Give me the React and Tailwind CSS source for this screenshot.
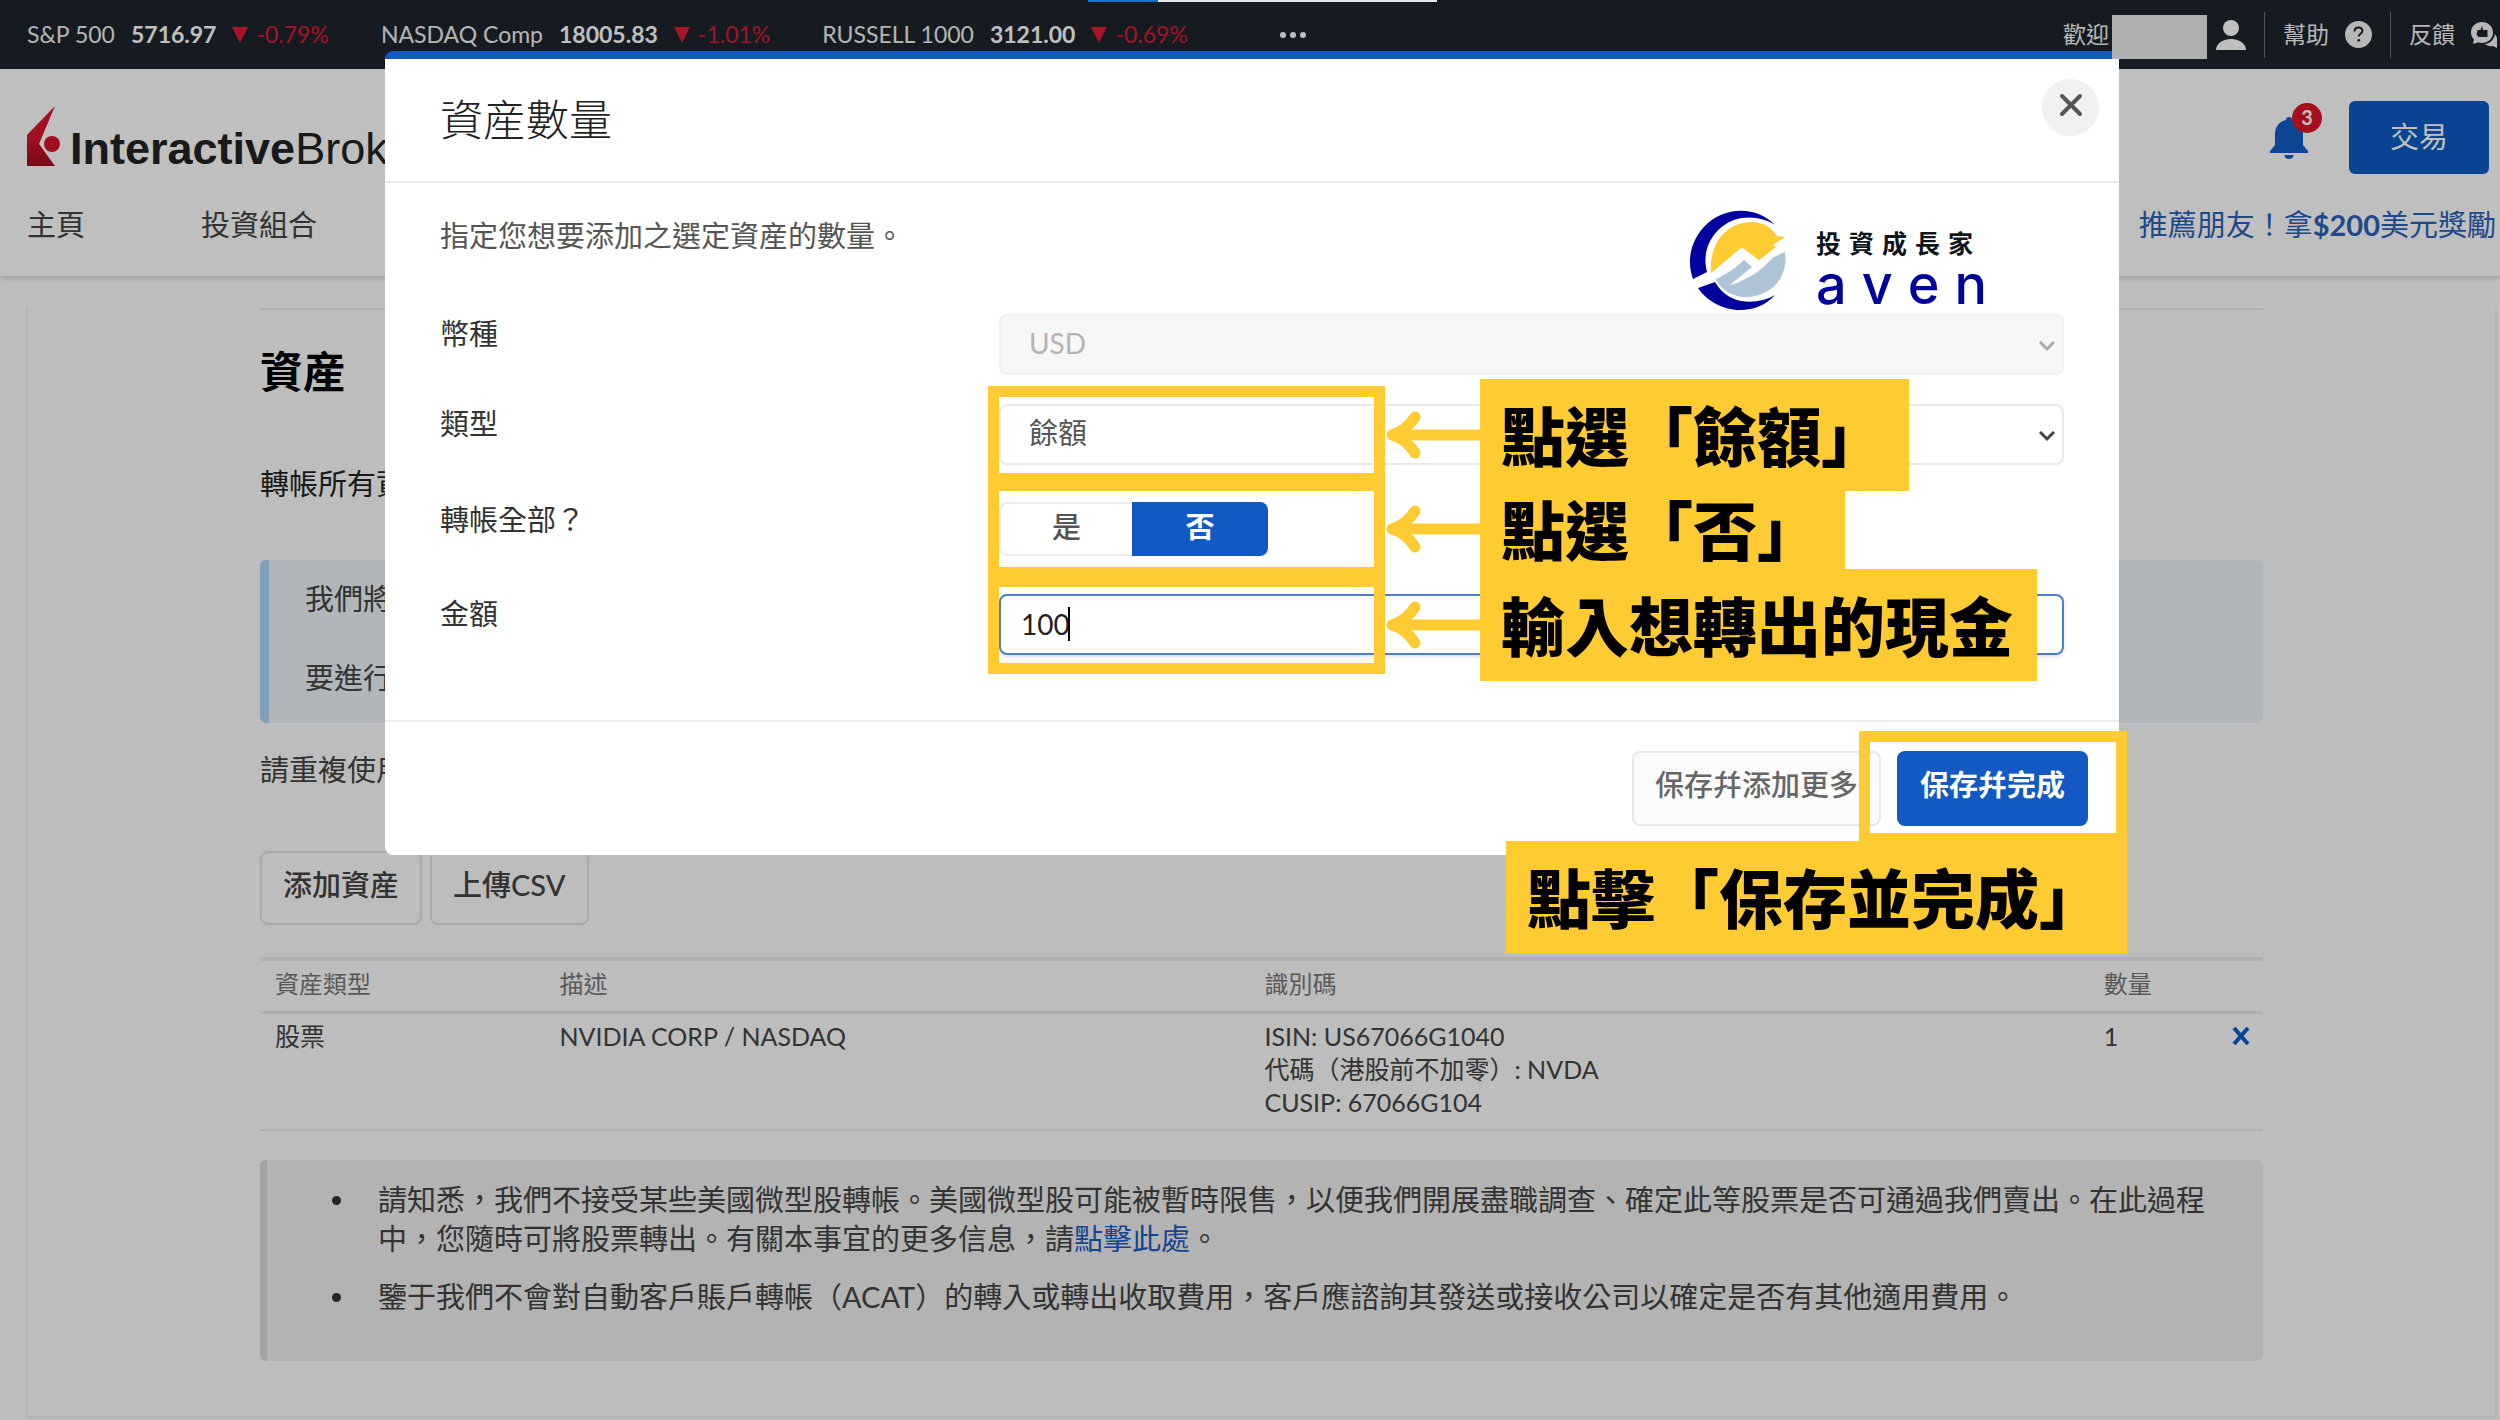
import { useState } from 'react'

const TICKERS = [
  { name: 'S&P 500', value: '5716.97', change: '-0.79%' },
  { name: 'NASDAQ Comp', value: '18005.83', change: '-1.01%' },
  { name: 'RUSSELL 1000', value: '3121.00', change: '-0.69%' },
]

function Ticker({ name, value, change }) {
  return (
    <div className="flex items-center">
      <span className="text-[#f0f0f0]">{name}</span>
      <span className="ml-4 font-bold text-white">{value}</span>
      <svg className="ml-4 h-4 w-4" viewBox="0 0 16 16" fill="#e01c34">
        <path d="M0 0h16L8 16z" />
      </svg>
      <span className="ml-2 text-[#d81c34]">{change}</span>
    </div>
  )
}

function TopBar() {
  return (
    <div className="flex h-[69px] items-center justify-between bg-[#1c242b] pl-[27px] pr-[3px] text-[23px]">
      <div className="flex items-center gap-[52px]">
        {TICKERS.map(item => <Ticker key={item.name} {...item} />)}
        <button aria-label="更多" className="ml-10 flex gap-1">
          <span className="h-[6px] w-[6px] rounded-full bg-white" />
          <span className="h-[6px] w-[6px] rounded-full bg-white" />
          <span className="h-[6px] w-[6px] rounded-full bg-white" />
        </button>
      </div>
      <div className="flex items-center text-[#f4f4f4]">
        <span className="mr-[107px]">歡迎</span>
        <svg className="h-[30px] w-[30px]" viewBox="0 0 30 30" fill="#fff">
          <circle cx="15" cy="8" r="8" />
          <path d="M0 30c0-6 6-11 15-11s15 5 15 11z" />
        </svg>
        <span className="ml-[18px] mr-[18px] h-[46px] w-px bg-[#6b7379]" />
        <a href="#help" className="flex items-center gap-4">
          幫助
          <svg className="h-[27px] w-[27px]" viewBox="0 0 27 27">
            <circle cx="13.5" cy="13.5" r="13.5" fill="#f4f4f4" />
            <path d="M9.6 10.4c0-2.4 1.7-3.9 3.9-3.9s3.9 1.4 3.9 3.5c0 2.6-3.6 2.9-3.6 5.6" fill="none" stroke="#1c242b" strokeWidth="2" />
            <circle cx="13.7" cy="19.3" r="1.4" fill="#1c242b" />
          </svg>
        </a>
        <span className="ml-[18px] mr-[18px] h-[46px] w-px bg-[#6b7379]" />
        <a href="#feedback" className="flex items-center gap-4">
          反饋
          <svg className="h-[26px] w-[26px]" viewBox="0 0 26 26">
            <path d="M11 0c6 0 11 4.600 11 10.500S17 21 11 21c-1.400 0-2.700-.3-4-.8L2 22l1-4.500C1.200 15.700 0 13.200 0 10.500 0 4.600 5 0 11 0z" fill="#f4f4f4" />
            <path d="M11 4l1 4h4.500v7H7.500l-2-2.500 1-4.500h3z" fill="#1c242b" />
            <path d="M24 12c1.300 1.600 2 3 2 5v9l-4-2c-3.500.6-6-.2-8-2 5-.5 9-4 10-10z" fill="#f4f4f4" />
          </svg>
        </a>
      </div>
    </div>
  )
}

function Header() {
  return (
    <header className="relative bg-white pt-8 pb-8 shadow-[0_2px_5px_rgba(0,0,0,0.16)]">
      <div className="flex items-end justify-between pl-[27px] pr-[11px]">
        <a href="#home" className="mb-2 flex items-end gap-[10px] font-['Liberation_Sans',sans-serif] text-[45px] text-[#222]">
          <svg className="h-[60px] w-[33px]" viewBox="0 0 33 60">
            <defs>
              <linearGradient id="flame" x1="0" y1="0" x2="0" y2="1">
                <stop offset="0.5" stopColor="#d8132c" />
                <stop offset="1" stopColor="#a00d20" />
              </linearGradient>
            </defs>
            <path d="M28 0L0 29v31h28L12 38z" fill="url(#flame)" />
            <circle cx="25" cy="38" r="8" fill="#d8132c" />
          </svg>
          <span className="leading-[34px]"><b>Interactive</b>Brokers</span>
        </a>
        <div className="flex items-center gap-[41px]">
          <button aria-label="通知" className="relative h-[44px] w-[38px]">
            <svg className="h-[42px] w-[38px]" viewBox="0 0 38 42" fill="#0f5cc4">
              <path d="M19 0c-2 0-3 1-3 3C9 4.500 5 10 5 17v11l-5 6v2h38v-2l-5-6V17c0-7-4-12.500-11-14 0-2-1-3-3-3z" />
              <path d="M14.500 38h9c0 2.500-2 4-4.500 4s-4.500-1.500-4.500-4z" />
            </svg>
            <span className="absolute -top-[13px] left-[22px] h-[30px] w-[30px] rounded-full bg-[#dc1428] text-center text-[20px] leading-[28px] font-bold text-white">3</span>
          </button>
          <button className="h-[73px] w-[140px] rounded-[6px] bg-[#0d5bc4] pb-0.5 text-[29px] text-white">交易</button>
        </div>
      </div>
      <nav className="mt-8 flex justify-between pl-[27px] pr-[4px] text-[29px] leading-[38px] text-[#444]">
        <div className="flex gap-[116px]">
          <a href="#home">主頁</a>
          <a href="#portfolio">投資組合</a>
        </div>
        <a href="#refer" className="text-[#2b62b8]">推薦朋友！拿<b>$200</b>美元獎勵</a>
      </nav>
    </header>
  )
}

function AssetTable() {
  return (
    <table className="mt-8 w-full table-fixed border-collapse text-left text-[25px] leading-[33px] text-[#444]">
      <colgroup>
        <col className="w-[14.2%]" />
        <col className="w-[35.2%]" />
        <col className="w-[41.9%]" />
        <col className="w-[6.4%]" />
        <col />
      </colgroup>
      <thead>
        <tr className="h-[53px] border-t-4 border-b-3 border-[#eaeaea] text-[24px] text-[#777]">
          <th className="px-[15px] pb-1 font-normal">資産類型</th>
          <th className="px-[15px] pb-1 font-normal">描述</th>
          <th className="px-[15px] pb-1 font-normal">識別碼</th>
          <th className="px-[15px] pb-1 font-normal">數量</th>
          <th />
        </tr>
      </thead>
      <tbody>
        <tr className="border-b-2 border-[#eaeaea] align-top">
          <td className="px-[15px] pt-1.5 pb-2.5">股票</td>
          <td className="px-[15px] pt-1.5 pb-2.5">NVIDIA CORP / NASDAQ</td>
          <td className="px-[15px] pt-1.5 pb-2.5">
            ISIN: US67066G1040<br />
            代碼（港股前不加零）: NVDA<br />
            CUSIP: 67066G104
          </td>
          <td className="px-[15px] pt-1.5 pb-2.5">1</td>
          <td className="px-[15px] pt-1.5 pb-2.5">
            <button aria-label="刪除" className="block pt-[7px]">
              <svg className="h-[18px] w-[18px]" viewBox="0 0 18 18" stroke="#0d5bc4" strokeWidth="4">
                <path d="M2 1l14 16M16 1L2 17" />
              </svg>
            </button>
          </td>
        </tr>
      </tbody>
    </table>
  )
}

function Bullet({ children }) {
  return (
    <li className="flex">
      <span className="mt-4 mr-[37px] h-[9px] w-[9px] shrink-0 rounded-full bg-[#333]" />
      <p>{children}</p>
    </li>
  )
}

function AssetsPage() {
  return (
    <main className="ml-[26px] mr-[3px] border-x-2 border-b-2 border-[#f0f0f0] px-[232px] pb-[55px] text-[29px] leading-[38px] text-[#444]">
      <hr className="mt-8 border-t-2 border-[#eaeaea]" />
      <h2 className="mt-[34px] text-[43px] leading-[56px] font-bold text-black">資産</h2>
      <p className="mt-[65px] text-[#222]">轉帳所有資</p>
      <div className="mt-[57px] rounded-[6px] border-l-[9px] border-[#a9d5f2] bg-[#ebf3f8] pt-5 pb-[26px] pl-9">
        <p>我們將</p>
        <p className="mt-[41px]">要進行</p>
      </div>
      <p className="mt-7">請重複使用</p>
      <div className="mt-[62px] flex gap-2">
        <button className="h-[74px] rounded-[8px] border-2 border-[#e2e2e2] px-[21px] pb-1.5 font-medium">添加資産</button>
        <button className="h-[74px] rounded-[8px] border-2 border-[#e2e2e2] px-[21px] pb-1.5 font-medium">上傳CSV</button>
      </div>
      <AssetTable />
      <div className="mt-[29px] rounded-[6px] border-l-[7px] border-[#d8d8d8] bg-[#efefef] pt-5 pr-[50px] pb-[45px] pl-[65px] leading-[39px]">
        <ul className="space-y-[19px]">
          <Bullet>
            請知悉，我們不接受某些美國微型股轉帳。美國微型股可能被暫時限售，以便我們開展盡職調查、確定此等股票是否可通過我們賣出。在此過程中，您隨時可將股票轉出。有關本事宜的更多信息，請<a href="#more" className="text-[#1d5cc0]">點擊此處</a>。
          </Bullet>
          <Bullet>
            鑒于我們不會對自動客戶賬戶轉帳（ACAT）的轉入或轉出收取費用，客戶應諮詢其發送或接收公司以確定是否有其他適用費用。
          </Bullet>
        </ul>
      </div>
    </main>
  )
}

// Yellow frame round a field, with an arrow and a caption beside it
function Callout({ children }) {
  return (
    <div className="pointer-events-none absolute inset-y-0 -left-[11px] flex items-center">
      <div className="h-[98px] w-[397px] border-[11px] border-[#fecc32]" />
      <svg className="h-[50px] w-[95px]" viewBox="0 0 95 50" fill="none" stroke="#fecc32" strokeWidth="11">
        <path d="M9 25h86" />
        <path d="M30 7C25 15 17 22 7 25c10 3 18 10 23 18" strokeLinecap="round" strokeLinejoin="round" />
      </svg>
      <Caption>{children}</Caption>
    </div>
  )
}

function Caption({ children }) {
  return (
    <div className="bg-[#fecc32] pt-[10px] pr-6 pb-[6px] pl-[21px] text-[64px] leading-[96px] font-black whitespace-nowrap text-black">
      {children}
    </div>
  )
}

function Chevron({ color }) {
  return (
    <svg className="pointer-events-none absolute top-1/2 right-[9px] -mt-1 h-[11px] w-[16px]" viewBox="0 0 16 11" fill="none" stroke={color} strokeWidth="3">
      <path d="M1 1l7 7 7-7" />
    </svg>
  )
}

function AvenLogo() {
  return (
    <div className="absolute top-[27px] right-[132px] flex items-start gap-[29px]">
      <svg className="h-[100px] w-[98px]" viewBox="0 0 98 100">
        <path d="M86 15C70-2 40-5 19 13C2 28-3 50 4 69l14-7C12 40 24 18 45 10c15-5 30-2 41 5z" fill="#00009c" />
        <path d="M9 78c8 12 24 22 42 22 14 0 26-5 35-15-10 6-22 8-34 6-11-2-20-9-26-19z" fill="#00009c" />
        <path d="M22 63C20 42 30 20 50 14c15-5 30-1 38 12l8 1-12 8 3 2-18 14-17-13z" fill="#fecc32" />
        <path d="M26 68l27-20 12 8 6-3 25-11c4 24-13 45-40 45-13 0-25-8-30-19z" fill="#b0c4d8" />
        <path d="M6 71c18-6 34-19 48-33l17 13L95 30C88 46 72 62 56 69c-5 3-10 5-15 6l22-18-8-7C46 59 30 69 10 77z" fill="#fff" />
      </svg>
      <div className="w-[171px] pt-4">
        <div className="flex gap-2 text-[25px] leading-[34px] font-bold text-[#10141c]">
          {['投', '資', '成', '長', '家'].map(c => <span key={c}>{c}</span>)}
        </div>
        <div className="flex justify-between font-['Inter',sans-serif] text-[54px] leading-[50px] font-medium text-[#00009c]">
          {['a', 'v', 'e', 'n'].map(c => <span key={c}>{c}</span>)}
        </div>
      </div>
    </div>
  )
}

function QuantityDialog() {
  const [kind, setKind] = useState('餘額')
  const [all, setAll] = useState(false)
  const [amount, setAmount] = useState('100')

  return (
    <div role="dialog" aria-labelledby="dialog-title"
         className="relative w-full rounded-[8px] border-t-8 border-[#1259c3] bg-white">
      <div className="flex items-start justify-between border-b-2 border-[#ececec] pt-5 pr-5 pb-8 pl-[55px]">
        <h1 id="dialog-title" className="mt-3 text-[43px] leading-[58px] font-light text-[#222]">資産數量</h1>
        <button aria-label="關閉" className="flex h-[57px] w-[57px] items-center justify-center rounded-full bg-[#f1f1f2] pb-1.5">
          <svg className="h-6 w-6" viewBox="0 0 24 24" stroke="#555" strokeWidth="4" strokeLinecap="round">
            <path d="M3 3l18 18M21 3L3 21" />
          </svg>
        </button>
      </div>

      <form className="relative px-[55px] pt-[33px] pb-[65px] text-[29px] leading-[40px] text-[#333]">
        <AvenLogo />
        <p className="mb-[58px] text-[#555]">指定您想要添加之選定資産的數量。</p>

        <div className="mb-[29px] flex">
          <label htmlFor="currency" className="w-[559px]">幣種</label>
          <div className="relative flex-1">
            <select id="currency" disabled className="h-[61px] w-full appearance-none rounded-[8px] border-2 border-[#f1f1f1] bg-[#f7f7f7] px-[28px] pb-1 text-[28px] text-[#b4b4b4] opacity-100">
              <option>USD</option>
            </select>
            <Chevron color="#aaa" />
          </div>
        </div>

        <div className="mb-[37px] flex">
          <label htmlFor="kind" className="w-[559px]">類型</label>
          <div className="relative flex-1">
            <select id="kind" value={kind} onChange={e => setKind(e.target.value)}
                    className="h-[61px] w-full appearance-none rounded-[8px] border-2 border-[#e8eaee] bg-white px-[28px] pb-1 text-[#555]">
              <option>餘額</option>
            </select>
            <Chevron color="#444" />
            <Callout>點選「餘額」</Callout>
          </div>
        </div>

        <div className="mb-[38px] flex leading-[36px]">
          <span className="w-[559px]">轉帳全部？</span>
          <div className="relative flex h-[54px] flex-1">
            <button type="button" onClick={() => setAll(true)}
                    className="w-[133px] rounded-l-[8px] border-2 border-r-0 border-[#ececec] pb-1 font-medium text-[#555]">是</button>
            <button type="button" aria-pressed={!all} onClick={() => setAll(false)}
                    className="w-[136px] rounded-r-[8px] bg-[#1259c3] pb-1 font-bold text-white">否</button>
            <Callout>點選「否」</Callout>
          </div>
        </div>

        <div className="flex">
          <label htmlFor="amount" className="w-[559px]">金額</label>
          <div className="relative flex-1">
            <input id="amount" value={amount} onChange={e => setAmount(e.target.value)}
                   className="h-[61px] w-full rounded-[8px] border-2 border-[#4a80cc] bg-white px-5 pb-0.5 text-[28px] text-[#222] shadow-[0_2px_4px_rgba(0,0,0,0.12)] outline-none" />
            <span className="absolute top-[13px] left-[69px] h-[34px] w-[2px] bg-black" />
            <Callout>輸入想轉出的現金</Callout>
          </div>
        </div>
      </form>

      <div className="relative flex justify-end gap-4 border-t-2 border-[#ececec] pt-[29px] pb-[29px] pr-[31px] text-[29px]">
        <button className="h-[75px] rounded-[8px] border-2 border-[#e8e8e8] bg-[#fbfbfb] px-[21px] pb-2 font-medium text-[#666]">保存幷添加更多</button>
        <button className="h-[75px] rounded-[8px] bg-[#1259c3] px-[23px] pb-2 font-bold text-white">保存幷完成</button>
        <div className="pointer-events-none absolute top-[9px] -right-[8px] flex flex-col items-end">
          <div className="-mb-[3px] h-[113px] w-[268px] border-[11px] border-[#fecc32]" />
          <Caption>點擊「保存並完成」</Caption>
        </div>
      </div>
    </div>
  )
}

export default function App() {
  return (
    <div className="relative min-h-screen overflow-hidden bg-[#fdfdfd] font-['Lato','Noto_Sans_CJK_TC',sans-serif]">
      <TopBar />
      <Header />
      <AssetsPage />

      <div className="absolute inset-0 flex items-start bg-black/25 pt-[51px] pr-[381px] pl-[385px]">
        <QuantityDialog />
      </div>

      {/* Loading strip and the blanked account name stay above the dialog */}
      <div className="absolute top-0 left-[1088px] flex h-[2px] w-[349px] bg-[#e4e8ea]">
        <div className="w-1/5 bg-[#1a6fc8]" />
      </div>
      <div className="absolute top-[15px] right-[293px] h-[44px] w-[95px] bg-[#b0b0b0]" />
    </div>
  )
}
